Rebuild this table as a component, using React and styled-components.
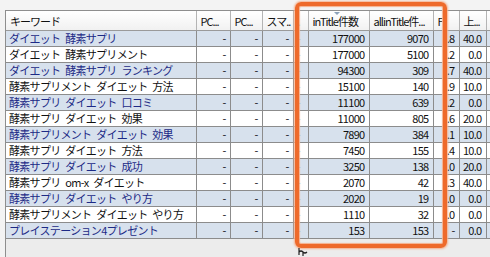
import React from 'react';
import styled, { createGlobalStyle } from 'styled-components';

const GlobalStyle = createGlobalStyle`
  body {
    margin: 0;
    background: #f3f3f3;
    font-family: "Noto Sans CJK JP", "DejaVu Sans", sans-serif;
  }
`;

const Page = styled.div`
  position: relative;
  width: 490px;
  height: 257px;
  overflow: hidden;
  padding: 10px 0 0 5px;
  box-sizing: border-box;
`;

const Grid = styled.div`
  width: 485px;
  height: 247px;
  overflow: hidden;
  background: #ececec;
  border-left: 1px solid #8e8e8e;
  border-top: 1px solid #8e8e8e;
  box-sizing: border-box;
`;

const Table = styled.table`
  table-layout: fixed;
  border-collapse: collapse;
  width: 515px;
  font-size: 11px;
  letter-spacing: -0.7px;
  word-spacing: 3px;
`;

const Head = styled.th`
  height: 19px;
  padding: 0 0 0 4px;
  text-align: left;
  font-weight: normal;
  color: #111;
  letter-spacing: -1px;
  white-space: nowrap;
  overflow: hidden;
  background: linear-gradient(#ffffff, #f1f1f1);
  border-right: 1px solid #b4b4b4;
  border-bottom: 1px solid #9a9a9a;
  position: relative;
`;

const SortMark = styled.span`
  position: absolute;
  top: 1px;
  left: 25px;
  width: 0;
  height: 0;
  border-left: 3px solid transparent;
  border-right: 3px solid transparent;
  border-top: 3px solid #8aa0b8;
`;

const Row = styled.tr`
  background: ${({ $odd }) => ($odd ? '#d7e1ed' : '#ffffff')};
`;

const Cell = styled.td`
  height: 15px;
  padding: 0 4px 0 3px;
  text-align: ${({ $left }) => ($left ? 'left' : 'right')};
  color: ${({ $link }) => ($link ? '#1d2a86' : '#111')};
  white-space: nowrap;
  overflow: hidden;
  border-right: 1px solid #8c8c8c;
  border-bottom: 1px solid #8c8c8c;
  line-height: 15px;
`;

const Marker = styled.div`
  position: absolute;
  left: 295px;
  top: 2px;
  width: 152px;
  height: 246px;
  box-sizing: border-box;
  border: 4px solid #ee6a2b;
  border-radius: 6px;
  box-shadow: 0 0 2px 1px #f6b08c, inset 0 0 1px 1px #f6b08c;
  pointer-events: none;
`;

const Cursor = styled.svg`
  position: absolute;
  left: 297px;
  top: 247px;
`;

const widths = [190, 34, 32, 31, 15, 61, 64, 26, 27, 35];

const rows = [
  ['ダイエット 酵素サプリ', '177000', '9070', '.8', '40.0'],
  ['ダイエット 酵素サプリメント', '177000', '5100', '.2', '0.0'],
  ['ダイエット 酵素サプリ ランキング', '94300', '309', '.7', '40.0'],
  ['酵素サプリメント ダイエット 方法', '15100', '140', '.9', '10.0'],
  ['酵素サプリ ダイエット 口コミ', '11100', '639', '.2', '0.0'],
  ['酵素サプリ ダイエット 効果', '11000', '805', '.6', '20.0'],
  ['酵素サプリメント ダイエット 効果', '7890', '384', '.1', '10.0'],
  ['酵素サプリ ダイエット 方法', '7450', '155', '.4', '10.0'],
  ['酵素サプリ ダイエット 成功', '3250', '138', '.0', '20.0'],
  ['酵素サプリ om-x ダイエット', '2070', '42', '.3', '40.0'],
  ['酵素サプリ ダイエット やり方', '2020', '19', '.0', '0.0'],
  ['酵素サプリメント ダイエット やり方', '1110', '32', '.0', '0.0'],
  ['プレイステーション4プレゼント', '153', '153', '-', '0.0'],
];

const App = () => {
  return (
    <Page>
      <GlobalStyle />
      <Grid>
        <Table>
          <colgroup>
            {widths.map((w, i) => (
              <col key={i} style={{ width: w }} />
            ))}
          </colgroup>
          <thead>
            <tr>
              <Head>キーワード</Head>
              <Head>PC...</Head>
              <Head>PC...</Head>
              <Head>スマ..</Head>
              <Head>.</Head>
              <Head>
                <SortMark />
                inTitle件数
              </Head>
              <Head>allinTitle件...</Head>
              <Head>F</Head>
              <Head>上...</Head>
              <Head />
            </tr>
          </thead>
          <tbody>
            {rows.map((r, i) => (
              <Row key={i} $odd={i % 2 === 0}>
                <Cell $left $link={i % 2 === 0}>{r[0]}</Cell>
                <Cell>-</Cell>
                <Cell>-</Cell>
                <Cell>-</Cell>
                <Cell $left>-</Cell>
                <Cell>{r[1]}</Cell>
                <Cell>{r[2]}</Cell>
                <Cell>{r[3]}</Cell>
                <Cell>{r[4]}</Cell>
                <Cell />
              </Row>
            ))}
          </tbody>
        </Table>
      </Grid>
      <Marker />
      <Cursor width="12" height="10" viewBox="0 0 12 10">
        <path d="M2 1 L2 8 M2 5 Q4 3 6 5 Q8 7 10 5 M6 5 L6 9" stroke="#222" strokeWidth="1.2" fill="none" />
      </Cursor>
    </Page>
  );
};

export default App;
